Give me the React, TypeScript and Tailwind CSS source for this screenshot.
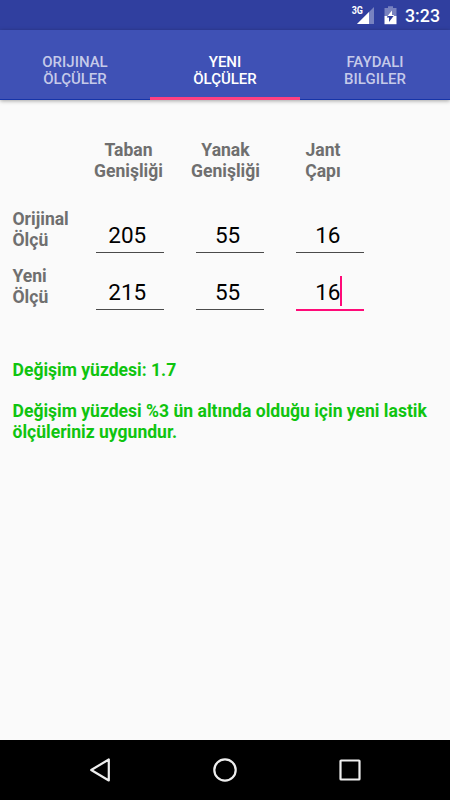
import { useState } from "react";

type Row = { label: [string, string]; values: string[] };

const TABS: [string, string][] = [
  ["ORIJINAL", "ÖLÇÜLER"],
  ["YENI", "ÖLÇÜLER"],
  ["FAYDALI", "BILGILER"],
];

const ROWS: Row[] = [
  { label: ["Orijinal", "Ölçü"], values: ["205", "55", "16"] },
  { label: ["Yeni", "Ölçü"], values: ["215", "55", "16"] },
];

function StatusBar() {
  return (
    <div className="flex h-[30px] shrink-0 items-center bg-[#303f9f] pl-[351px] text-white">
      <svg width="24" height="22" viewBox="0 0 24 22" aria-hidden="true">
        <path d="M23 3V20H6Z" fill="#fff" fillOpacity="0.35" />
        <path d="M18 8V20H6Z" fill="#fff" />
        <path d="M0 1H13V11H0Z" fill="#303f9f" />
        <text x="0.7" y="10" fontFamily="Roboto, sans-serif" fontSize="10" fontWeight="700" textLength="11.3" lengthAdjust="spacingAndGlyphs" fill="#fff">
          3G
        </text>
      </svg>
      <svg className="ml-[9px]" width="13" height="20" viewBox="0 0 13 20" aria-hidden="true">
        <path d="M4 1.2H9V3H12.5V11H0.5V3H4Z" fill="#fff" fillOpacity="0.35" />
        <path d="M0.5 11H12.5V19.2H0.5Z" fill="#fff" />
        <path d="M3.6 11H9.6L5 17V12.5H2.8Z" fill="#303f9f" />
        <path d="M8 5.5V10H10.2L9.6 11H3.6Z" fill="#fff" />
      </svg>
      <span className="ml-[8px] pt-px text-[17.8px] leading-5 font-medium">3:23</span>
    </div>
  );
}

function TabBar({ active, onSelect }: { active: number; onSelect: (index: number) => void }) {
  return (
    <div
      role="tablist"
      className="flex h-[70px] shrink-0 bg-[#3f51b5] shadow-[0_1px_4px_rgba(0,0,0,0.35)]"
    >
      {TABS.map(([first, second], i) => (
        <button
          key={first}
          type="button"
          role="tab"
          aria-selected={active === i}
          onClick={() => onSelect(i)}
          className={
            "flex-1 pt-[24px] text-[15px] leading-[17px] font-medium " +
            (active === i
              ? "border-b-[3px] border-[#ff4081] pb-[9px] text-white"
              : "border-b border-[#1634a8] pb-[11px] text-[#c5cae9]")
          }
        >
          {first}
          <br />
          {second}
        </button>
      ))}
    </div>
  );
}

function Field({ value, focused, label }: { value: string; focused: boolean; label: string }) {
  return (
    <div
      className={
        "relative mr-8 w-[68.3px] " +
        (focused ? "h-[45px] border-b-[2px] border-[#ff0a78]" : "h-[44px] border-b border-[#4a4a4a]")
      }
    >
      <input
        aria-label={label}
        defaultValue={value}
        className="h-[42px] w-[63.5px] bg-transparent pt-[9px] text-center text-[22.5px] leading-[26px] text-black outline-none"
      />
      {focused && <span className="absolute top-[10px] left-[44px] h-[30px] w-[2px] bg-[#ff0a78]" />}
    </div>
  );
}

export default function App() {
  const [tab, setTab] = useState(1);

  return (
    <div className="flex h-[800px] w-[450px] flex-col overflow-hidden bg-[#fafafa] font-[Roboto,sans-serif]">
      <StatusBar />
      <TabBar active={tab} onSelect={setTab} />

      <main className="flex-1 text-[17.56px] leading-[20.5px] font-bold text-[#6f6f6f]">
        <div className="flex pt-[40px] pl-[78px] text-center">
          <p className="w-[101px]">
            Taban
            <br />
            Genişliği
          </p>
          <p className="w-[93px]">
            Yanak
            <br />
            Genişliği
          </p>
          <p className="w-[102px]">
            Jant
            <br />
            Çapı
          </p>
        </div>

        <div className="pt-[28px] pl-[12.5px]">
          {ROWS.map((row, r) => (
            <div key={row.label[0]} className="flex h-[57px]">
              <p className="w-[83px]">
                {row.label[0]}
                <br />
                {row.label[1]}
              </p>
              <div className="flex font-normal">
                {row.values.map((value, c) => (
                  <Field key={c} value={value} focused={r === 1 && c === 2} label={`${row.label[0]} ${c + 1}`} />
                ))}
              </div>
            </div>
          ))}
        </div>

        <div className="pt-[37px] pl-[12.5px] text-[#0fc40f]">
          <p>Değişim yüzdesi: 1.7</p>
          <p className="pt-[20.5px]">
            Değişim yüzdesi %3 ün altında olduğu için yeni lastik
            <br />
            ölçüleriniz uygundur.
          </p>
        </div>
      </main>

      <nav className="flex h-[60px] shrink-0 items-center justify-center gap-[95px] bg-black">
        <svg width="30" height="30" viewBox="0 0 30 30" fill="none" stroke="#eee" strokeWidth="2.2" aria-hidden="true">
          <path d="M23.8 4.5V25.5L6.2 15Z" strokeLinejoin="round" />
        </svg>
        <svg width="30" height="30" viewBox="0 0 30 30" fill="none" stroke="#eee" strokeWidth="2.2" aria-hidden="true">
          <circle cx="15" cy="15" r="10.7" />
        </svg>
        <svg width="30" height="30" viewBox="0 0 30 30" fill="none" stroke="#eee" strokeWidth="2.2" aria-hidden="true">
          <rect x="5.5" y="5.5" width="19" height="19" rx="0.6" />
        </svg>
      </nav>
    </div>
  );
}
